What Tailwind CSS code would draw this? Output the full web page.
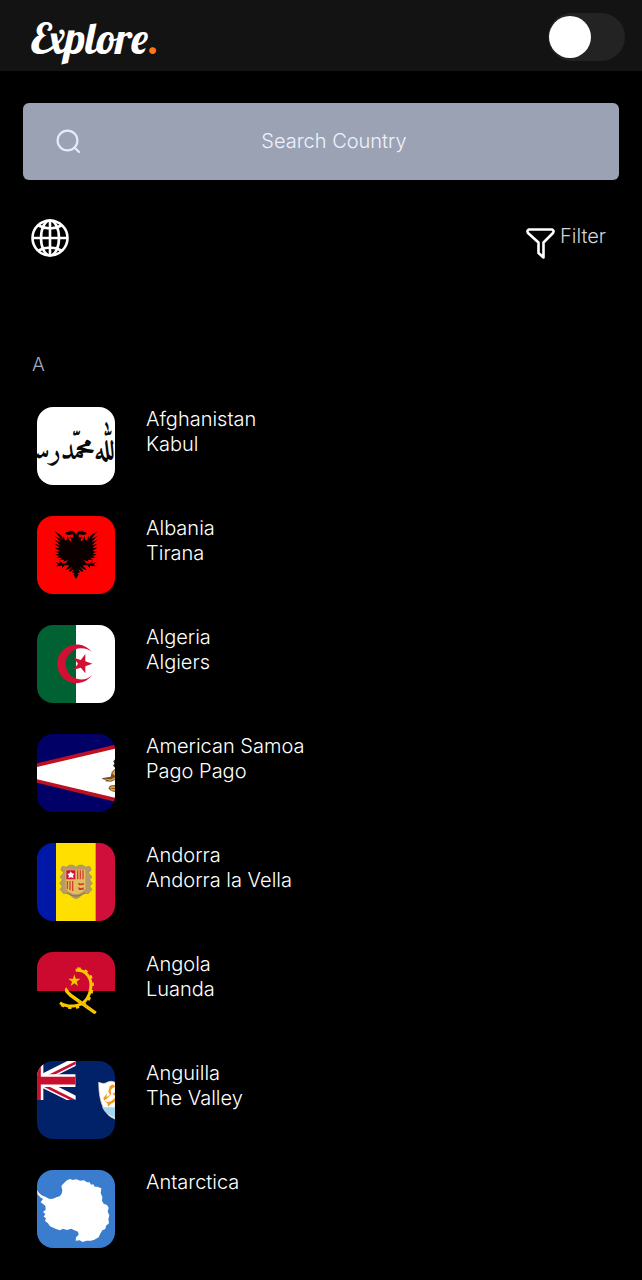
<!DOCTYPE html>
<html lang="en">
<head>
<meta charset="utf-8">
<meta name="viewport" content="width=device-width, initial-scale=1">
<title>Explore.</title>
<script src="https://cdn.jsdelivr.net/npm/@tailwindcss/browser@4"></script>
</head>
<body class="min-h-screen bg-black font-['Inter',sans-serif] text-[20px] leading-[25px] font-light text-white">
<header class="flex h-[71px] items-center justify-between bg-[#131313] pl-[31px] pr-[17px]">
  <a href="#" class="pt-1 font-['Lobster','Liberation_Serif',serif] text-[43px] leading-[52px] font-normal text-white" aria-label="Explore home">Explore<span class="text-[#ff7518]">.</span></a>
  <input type="checkbox" role="switch" aria-label="Light theme" class="mt-[3px] flex h-12 w-[77px] appearance-none items-center rounded-full bg-[#232323] px-px before:size-[42px] before:rounded-full before:bg-white checked:justify-end">
</header>
<main>
  <label class="mx-[23px] mt-8 flex h-[77px] items-center rounded-md bg-[#9aa2b4] px-8">
    <svg class="size-[26px] shrink-0" viewBox="0 0 26 26" fill="none" stroke="#e6ebfa" stroke-width="2.2" stroke-linecap="round" aria-hidden="true"><circle cx="12.5" cy="11.500" r="9.900"/><path d="M19.500 18.500 24 23"/></svg>
    <input type="text" aria-label="Search Country" placeholder="Search Country" class="min-w-0 flex-1 bg-transparent text-center text-white outline-none placeholder:text-[#eef2fd]">
  </label>
  <div class="flex items-start justify-between pt-[39px] pr-9 pl-[31px]">
    <button type="button" aria-label="All regions">
      <svg class="size-[38px]" viewBox="0 0 38 38" fill="none" stroke="#fff" stroke-width="2.6" aria-hidden="true"><circle cx="19" cy="19" r="17.5"/><ellipse cx="19" cy="19" rx="9" ry="17.5"/><path d="M19 1v36M1 19h36M7.500 6.500Q19 12.500 30.500 6.500M7.500 31.500Q19 25.500 30.500 31.500"/></svg>
    </button>
    <button type="button" class="flex items-start gap-1 pt-[5px] text-[#d4d4d6]">
      <svg class="mt-1 h-8 w-[30px]" viewBox="0 0 30 32" fill="none" stroke="#fff" stroke-width="2.6" stroke-linejoin="round" aria-hidden="true"><path d="M3 1.500H26Q28.500 2.500 27 5L17.500 14.500V29.500L12.500 25V14.500L2 5Q.500 2.500 3 1.500Z"/></svg>
      <span>Filter</span>
    </button>
  </div>
  <section class="px-8 pt-[92px] pb-8">
    <h2 class="text-[19px] text-[#a0abc0]">A</h2>
    <ul class="mt-[30px] flex flex-col gap-[31px] pl-[5px]">
      <li class="flex gap-[31px]">
        <svg class="size-[78px] shrink-0 rounded-2xl" viewBox="22 21 234 234" role="img" aria-label="Flag of Afghanistan"><path fill="#fff" d="M22 21h234v234H22z"/>
          <text x="139" y="177" fill="#080808" font-family="Amiri, 'Noto Naskh Arabic', 'DejaVu Sans', sans-serif" font-size="84" font-weight="700" text-anchor="middle" direction="rtl">إلّا&zwnj;اللّٰه&zwnj;محمّد&zwnj;رسول</text></svg>
        <div><h3>Afghanistan</h3><p>Kabul</p></div>
      </li>
      <li class="flex gap-[31px]">
        <svg class="size-[78px] shrink-0 rounded-2xl" viewBox="22 18 234 234" role="img" aria-label="Flag of Albania"><path fill="#f00" d="M22 18h234v234H22z"/>
          <defs><path id="eagle-half" d="M140 83Q132 88 130 83Q133 77 129 73L117 75L105 71Q112 67 111 65L118 66L119 62Q132 61 136 68Q139 73 139 77V207L134 199L131 193L135 190L127 187L132 178L121 186L117 182L129 169L119 176L108 181L112 173L119 166L105 166L98 174L97 167L78 169L86 163L76 157L92 160L88 152L98 160L107 160L117 151L107 153L100 157L104 149L87 151L97 143L79 144L90 137L76 135L89 130L76 125L90 123L75 113L90 114L75 101L91 106L75 89L93 97L75 78L94 87L75 64L94 76L100 86L101 77L106 91Q111 93 112 86L113 78L119 91Q125 98 125 88L119 82Z"/></defs>
          <g fill="#0a0000"><use href="#eagle-half"/><use href="#eagle-half" transform="matrix(-1 0 0 1 278 0)"/></g></svg>
        <div><h3>Albania</h3><p>Tirana</p></div>
      </li>
      <li class="flex gap-[31px]">
        <svg class="size-[78px] shrink-0 rounded-2xl" viewBox="22 14 234 234" role="img" aria-label="Flag of Algeria"><path fill="#006233" d="M22 14h117v234H22z"/><path fill="#fff" d="M139 14h117v234H139z"/><path fill="#d21034" d="M187 96A58 58 0 1 0 187 165A47 47 0 1 1 187 96ZM188 130L167 137.500V159L153.500 142L132 148L145 130L132 112L153.500 119L167 101V123Z"/></svg>
        <div><h3>Algeria</h3><p>Algiers</p></div>
      </li>
      <li class="flex gap-[31px]">
        <svg class="size-[78px] shrink-0 rounded-2xl" viewBox="22 15 234 234" role="img" aria-label="Flag of American Samoa"><path fill="#000066" d="M22 15h234v234H22z"/><path fill="#bd1021" d="M22 103 256 47V218L22 161Z"/><path fill="#fff" d="M22 114 256 59V206L22 151Z"/><path fill="#765126" d="M256 119 246 130 243 143 219 147 217 150 229 153 227 157 244 158 256 153Z"/><path fill="#272727" d="M256 91 251 97 254 104 250 110 256 116Z"/><path fill="#d8a44d" d="M224 149 244 151 256 145V151L241 156ZM247 133 256 123V141Z"/><path fill="#8b5c20" d="M256 168Q238 167 237 178Q241 188 256 189Z"/><path d="M242 177Q249 172 256 175M243 181 256 183" fill="none" stroke="#e5b13e" stroke-width="4"/></svg>
        <div><h3>American Samoa</h3><p>Pago Pago</p></div>
      </li>
      <li class="flex gap-[31px]">
        <svg class="size-[78px] shrink-0 rounded-2xl" viewBox="22 18 234 234" role="img" aria-label="Flag of Andorra"><path fill="#0018a8" d="M22 18h57v234H22z"/><path fill="#fedf00" d="M79 18h120v234H79z"/><path fill="#d0103a" d="M198 18h58v234h-58z"/>
          <path fill="#b59b68" stroke="#a28b60" stroke-width="2" d="M139 91Q130 81 119 85Q111 94 98 88L93 98 102 107 91 120 98 128 90 139 98 148 91 157 102 170 118 168Q128 184 139 185Q150 184 160 168L176 170 187 157 180 148 188 139 180 128 187 120 176 107 185 98 180 88Q167 94 159 85Q148 81 139 91Z"/>
          <path fill="#e4bd62" d="M108 98h59v57q-5 12-28 17-25-5-31-17z"/><path fill="#d0103a" d="M110 100h27v27h-27z"/><path fill="#fff" d="m123 103 4 6 7 1-4 6 2 7-8-2-8 2 2-7-5-5 7-2z"/><path d="M144 100v27M152 100v27M160 100v27M113 132v24M121 132v28M129 132v30" stroke="#d0442a" stroke-width="4"/><path d="m145 137 10 3 7-3v7l-14 1zM145 151l10 3 7-3v7l-14 1z" fill="#c33d21"/><path d="M112 168q26 18 54 0" fill="none" stroke="#8e7950" stroke-width="4"/></svg>
        <div><h3>Andorra</h3><p>Andorra la Vella</p></div>
      </li>
      <li class="flex gap-[31px]">
        <svg class="size-[78px] shrink-0 rounded-2xl" viewBox="22 18 234 234" role="img" aria-label="Flag of Angola"><path d="M22 18h234v234H22z"/><path fill="#cc092f" d="M22 18h234v117H22z"/><path d="M138 73C170 70 188 98 183 127C178 160 160 178 132 180Q108 182 91 170" fill="none" stroke="#f9c700" stroke-width="9"/><path d="M143 69C176 69 192 99 187 128C182 163 162 183 132 184Q108 185 91 173" fill="none" stroke="#f9c700" stroke-width="10" stroke-dasharray="10 12"/><path fill="#f9c700" d="m134 85 4 13h14l-11 9 4 13-11-8-11 8 4-13-11-9h14zM110 124Q103 130 107 139L120 152 193 204Q199 204 201 197L135 150Q119 141 110 124Z"/><path d="m147 164 45 33" stroke="#9e7d13" stroke-width="2" stroke-dasharray="4 5"/></svg>
        <div><h3>Angola</h3><p>Luanda</p></div>
      </li>
      <li class="flex gap-[31px]">
        <svg class="size-[78px] shrink-0 rounded-2xl" viewBox="22 15 234 234" role="img" aria-label="Flag of Anguilla"><path fill="#012169" d="M22 15h234v234H22z"/>
          <clipPath id="canton"><path d="M22 15h116v117H22z"/></clipPath><g clip-path="url(#canton)"><path d="M22 74 138 16M22 74 138 132" stroke="#fff" stroke-width="24"/><path d="M22 78 138 136M22 78 138 20" stroke="#c8102e" stroke-width="8"/><path d="M22 15v117M22 74h116" stroke="#fff" stroke-width="38"/><path d="M22 15v117M22 74h116" stroke="#c8102e" stroke-width="23"/></g>
          <path fill="#fff" stroke="#e7e4bd" stroke-width="2" d="M207 79Q224 86 234 78Q245 73 256 79V189Q208 173 207 79Z"/><path fill="#a6d6ed" d="M217 154h39v31q-28-10-39-31z"/><path fill="#f39b20" d="M240 91Q252 80 256 92L246 98Q240 106 245 114L235 125 223 134 221 125 227 119 231 111 231 124 241 116 236 107ZM222 133Q231 142 244 136L256 125V137L244 143 235 152 234 143ZM248 113 256 109V120Z"/></svg>
        <div><h3>Anguilla</h3><p>The Valley</p></div>
      </li>
      <li class="flex gap-[31px]">
        <svg class="size-[78px] shrink-0 rounded-2xl" viewBox="22 18 234 234" role="img" aria-label="Flag of Antarctica"><path fill="#3a7dce" d="M22 18h234v234H22z"/><path fill="#fff" d="M22 79 28 87 36 94 48 99 60 105 70 104 80 100 90 97 96 89 98 79 95 66 103 57 112 49 121 45 129 48 140 46 151 50 163 49 172 55 180 55 184 62 191 61 195 68 203 68 215 73 213 87 218 99 217 110 222 119 232 123 237 131 234 143 239 154 236 166 238 178 229 185 227 195 218 199 211 211 207 220 194 227 184 230 170 230 159 234 150 229 138 230 139 220 147 212 145 203 134 199 125 194 112 198 100 194 91 199 79 195 71 191 61 187 55 178 46 171 49 163 42 158 47 150 40 144 48 137 47 125 40 120 33 115 40 105 32 100 24 91Z"/></svg>
        <div><h3>Antarctica</h3></div>
      </li>
    </ul>
  </section>
</main>
</body>
</html>
